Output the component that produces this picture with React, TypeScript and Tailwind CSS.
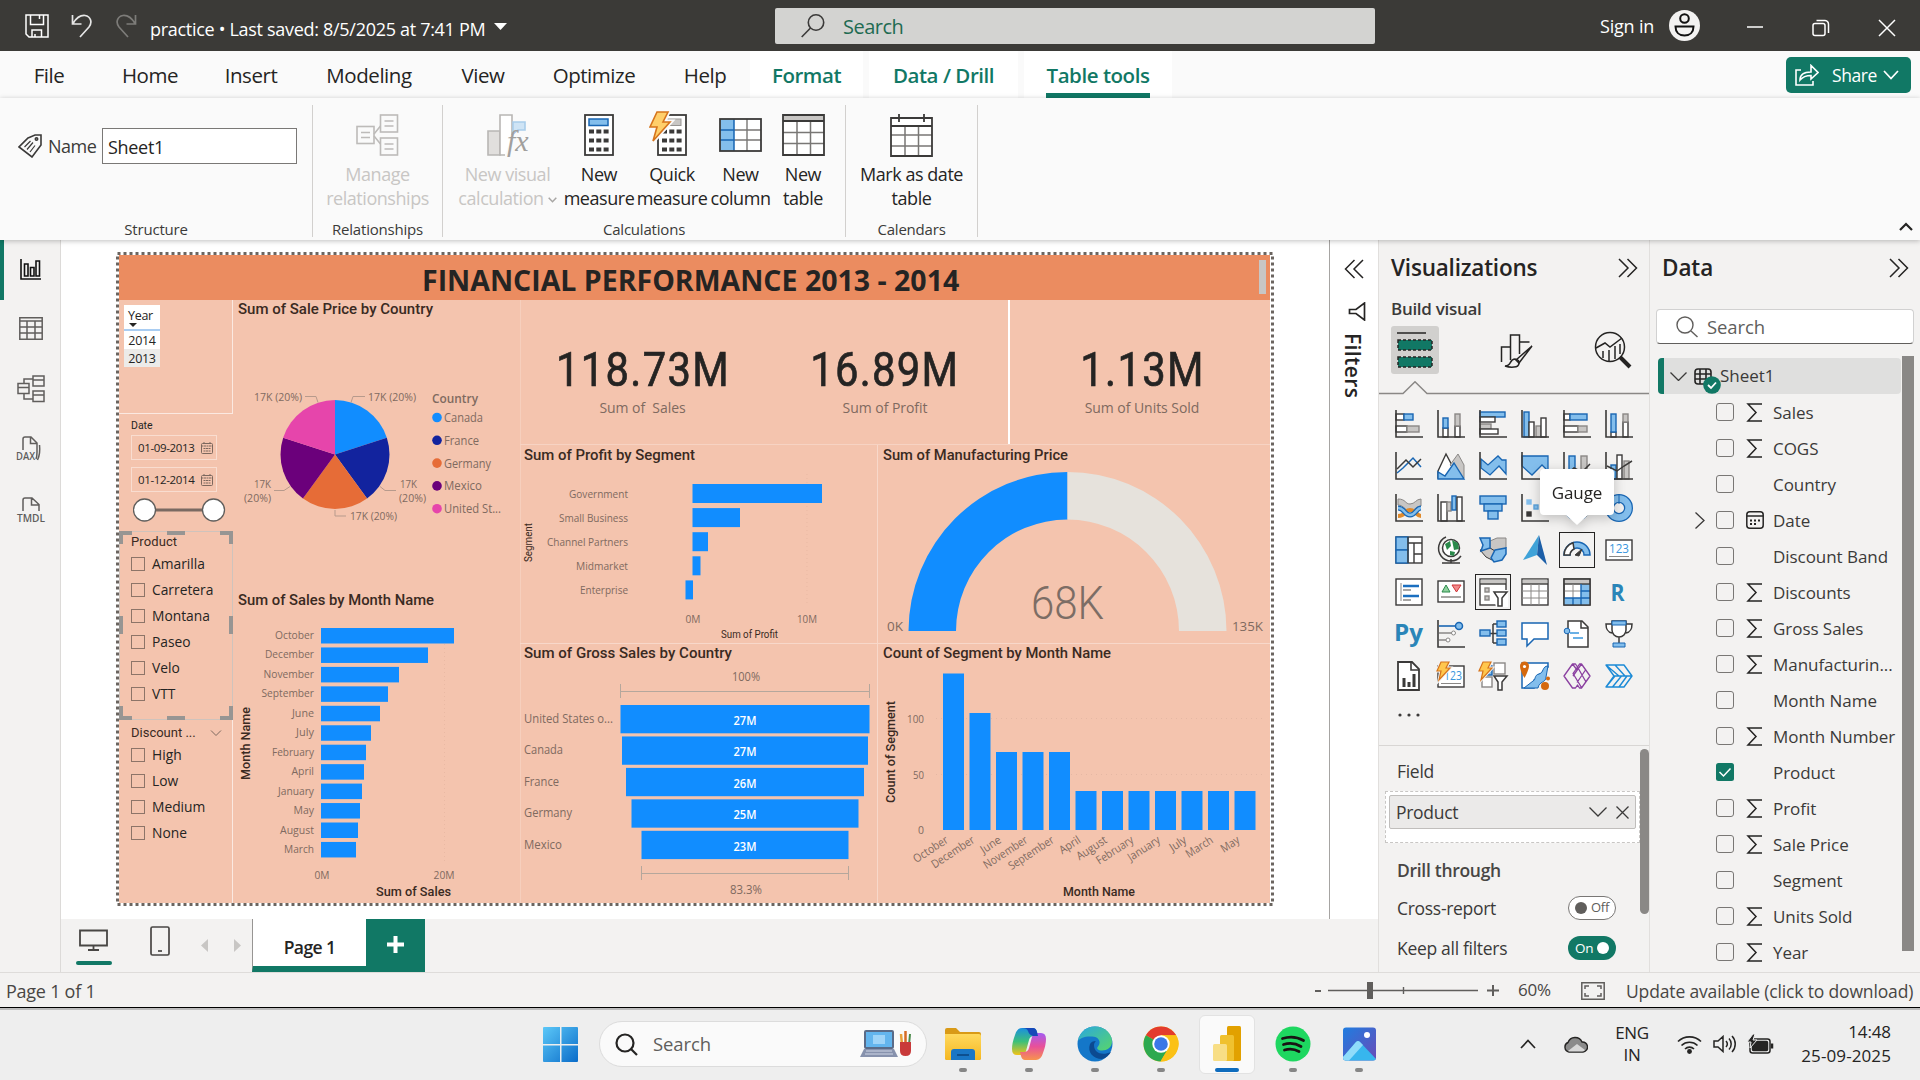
import React from "react";

const K = "#3b3a39";
const B = "#83beec";
const BS = "#1966b3";
const G = "#c8c6c4";
const BAR = "#118dff";
const SEG = '"Open Sans","Noto Sans",sans-serif';
const DIN = 'Roboto,"Open Sans",sans-serif';

/* ---------- shared bits ---------- */

type TP = {
  x: number; y: number; w?: number; s?: number; fill?: string; a?: "start" | "middle" | "end";
  f?: string; wt?: number; t: string; rot?: number;
};
function Tx({ x, y, w, s = 12, fill = "#7f6a60", a = "start", f = SEG, wt = 400, t, rot }: TP) {
  return (
    <text x={x} y={y} fontSize={s} fill={fill} textAnchor={a} fontFamily={f} fontWeight={wt}
      textLength={w} lengthAdjust="spacingAndGlyphs" transform={rot ? `rotate(${rot} ${x} ${y})` : undefined}
      xmlSpace="preserve">{t}</text>
  );
}

function Chevrons({ left }: { left?: boolean }) {
  return (
    <svg width="20" height="20" viewBox="0 0 20 20" fill="none" stroke="#252423" strokeWidth="1.500" className={left ? "rotate-180" : ""}>
      <path d="M1 1l9 9-9 9M9.500 1l9 9-9 9" />
    </svg>
  );
}

/* ---------- title bar ---------- */

function TitleBar() {
  return (
    <header className="flex h-[51px] items-center bg-[#3b3a37] text-white">
      <div className="flex w-[775px] items-center pl-[25px]">
        <svg width="24" height="24" viewBox="0 0 24 24" fill="none" stroke="#fff" strokeWidth="1.500">
          <path d="M1 1h22v22H4l-3-3zM5.500 1v9.500h13V1M7 23v-7h9.500v7M10 20v3M14.500 1v4" />
        </svg>
        <svg className="ml-[22px]" width="22" height="24" viewBox="0 0 22 24" fill="none" stroke="#e6e6e6" strokeWidth="1.700">
          <path d="M1.500 1v9h9M2 9.500C5 4.500 9 1 14 1.500c6 1 7.500 7 4 11.500L9 23" />
        </svg>
        <svg className="ml-[22px]" width="22" height="24" viewBox="0 0 22 24" fill="none" stroke="#7d7c79" strokeWidth="1.700">
          <path d="M20.500 1v9h-9M20 9.500C17 4.500 13 1 8 1.500c-6 1-7.500 7-4 11.500l9 10" />
        </svg>
        <span className="ml-[13px] w-[336px] whitespace-nowrap pt-[7px] text-[18px] leading-6 tracking-[-0.3px]">practice • Last saved: 8/5/2025 at 7:41 PM</span>
        <svg className="ml-2 mt-[3px]" width="13" height="8" viewBox="0 0 13 8"><path d="M0 0h13L6.500 7z" fill="#fff" /></svg>
      </div>
      <div className="mt-px flex h-[36px] w-[600px] items-center rounded-[2px] bg-[#d3d3d1] pl-[26px] text-[#1f6b52]">
        <svg width="24" height="24" viewBox="0 0 24 24" fill="none" stroke="#3b3a39" strokeWidth="1.600">
          <circle cx="15" cy="8.500" r="7.700" /><path d="M9.500 14L.7 23" />
        </svg>
        <span className="ml-[18px] pt-[2px] text-[20px] tracking-[-0.5px]">Search</span>
      </div>
      <div className="flex flex-1 items-center pl-[225px]">
        <span className="w-[69px] whitespace-nowrap pt-[2px] text-[18px] tracking-[-0.2px]">Sign in</span>
        <svg width="31" height="31" viewBox="0 0 31 31" fill="none" stroke="#111" strokeWidth="2">
          <circle cx="15.500" cy="15.500" r="15.500" fill="#f3f2f1" stroke="none" />
          <circle cx="15.500" cy="8.500" r="4.300" />
          <path d="M6.500 16.500h18c0 5.500-3.500 9-9 9s-9-3.500-9-9z" />
        </svg>
        <svg className="ml-[46px] mt-[3px]" width="18" height="18" viewBox="0 0 18 18" stroke="#fff" strokeWidth="1.500"><path d="M1 9h16" /></svg>
        <svg className="ml-[48px] mt-[5px]" width="18" height="18" viewBox="0 0 18 18" fill="none" stroke="#fff" strokeWidth="1.500">
          <rect x="1" y="4.500" width="12" height="12" rx="2" /><path d="M4.500 1.500H13a4 4 0 0 1 3.500 4V14" />
        </svg>
        <svg className="ml-[48px] mt-[5px]" width="18" height="18" viewBox="0 0 18 18" stroke="#fff" strokeWidth="1.500"><path d="M1 1l16 16M17 1L1 17" /></svg>
      </div>
    </header>
  );
}

/* ---------- menu + ribbon ---------- */

function MenuBar() {
  const m = "whitespace-nowrap text-center";
  return (
    <nav className="flex h-[47px] bg-[#fafafa] text-[20.500px] leading-[49px] tracking-[-0.45px] text-[#252423]">
      <span className={"ml-[24px] w-[50px] " + m}>File</span>
      <span className={"ml-[36px] w-[80px] " + m}>Home</span>
      <span className={"ml-[22px] w-[78px] " + m}>Insert</span>
      <span className={"ml-[25px] w-[108px] " + m}>Modeling</span>
      <span className={"ml-[23px] w-[74px] " + m}>View</span>
      <span className={"ml-[24px] w-[100px] " + m}>Optimize</span>
      <span className={"ml-[26px] w-[70px] " + m}>Help</span>
      <span className={"ml-[10px] w-[113px] bg-white font-semibold text-[#117865] " + m}>Format</span>
      <span className={"ml-[6px] w-[149px] bg-white font-semibold text-[#117865] " + m}>Data / Drill</span>
      <span className={"ml-[6px] flex w-[148px] flex-col items-center bg-white font-semibold text-[#117865] " + m}>
        <span className="h-[42px]">Table tools</span>
        <span className="h-[5px] w-[104px] bg-[#117865]" />
      </span>
      <div className="ml-auto mr-[9px] mt-[6px] flex h-[36px] w-[125px] items-center rounded-[5px] bg-[#117865] pl-[9px] text-white">
        <svg width="24" height="22" viewBox="0 0 24 22" fill="none" stroke="#fff" strokeWidth="1.600">
          <path d="M6 6H1v15h17v-4M5 16c0-6 4-8 11-8V1.500l7 7-7 6.500v-3.500c-5 0-8 1-11 4.500z" />
        </svg>
        <span className="ml-[13px] w-[46px] text-[17.500px] leading-9">Share</span>
        <svg className="ml-[5px]" width="16" height="10" viewBox="0 0 16 10" fill="none" stroke="#fff" strokeWidth="1.700"><path d="M1 1l7 7.500L15 1" /></svg>
      </div>
    </nav>
  );
}

function RibbonButton({ icon, a, b, cls, off, chev }: { icon: React.ReactNode; a: string; b: string; cls: string; off?: boolean; chev?: boolean }) {
  return (
    <div className={"flex flex-col items-center " + cls}>
      <div className="flex h-[46px] items-center justify-center pt-[2px]">{icon}</div>
      <div className={"mt-[5px] whitespace-nowrap text-center text-[18px] leading-6 tracking-[-0.45px] " + (off ? "text-[#c8c6c4]" : "text-[#252423]")}>
        {a}<br />{b}
        {chev && <svg className="ml-[4px] inline" width="9" height="6" viewBox="0 0 9 6" fill="none" stroke="#a8a6a4" strokeWidth="1.500"><path d="M.7.7l3.800 4L8.300.7" /></svg>}
      </div>
    </div>
  );
}

const calcDots = [0, 1, 2].flatMap((r) => [0, 1, 2].map((c) => <rect key={`${r}${c}`} x={5 + c * 7.3} y={15.5 + r * 9} width="5" height="4" fill={K} />));

const Doc = ({ x, y }: { x: number; y: number }) => (
  <g transform={`translate(${x} ${y})`}><rect width="17" height="17" /><path d="M4 6h9M4 11h9" /></g>
);

function Ribbon() {
  const grp = "flex flex-col justify-between border-r border-[#d2d0ce] h-[132px]";
  const cap = "text-center text-[15px] leading-[20px] tracking-[-0.2px] text-[#3b3a39] -mb-[2px]";
  return (
    <section className="relative z-10 flex h-[142px] bg-[#fafafa] pt-[7px] shadow-[0_1px_5px_rgba(0,0,0,0.25)]">
      <div className={"w-[313px] " + grp}>
        <div className="flex items-center pl-[18px] pt-[23px]">
          <svg width="24" height="24" viewBox="0 0 24 24" fill="none" stroke={K} strokeWidth="1.600">
            <path d="M10 4l7-3h6v10l-9 12L1 13z" /><circle cx="18.500" cy="5" r="1.200" /><path d="M6.500 13l6-6M9 15.500l6-7M12 18l5-6.500" strokeWidth="1.200" />
          </svg>
          <span className="ml-[6px] w-[54px] text-[18px] tracking-[-0.5px] text-[#3b3a39]">Name</span>
          <div className="h-[36px] w-[195px] border border-[#7a7876] bg-white pl-[5px] text-[18px] leading-[37px] tracking-[-0.3px] text-[#252423]">Sheet1</div>
        </div>
        <div className={cap}>Structure</div>
      </div>
      <div className={"w-[130px] " + grp}>
        <RibbonButton cls="pt-[6px]" off a="Manage" b="relationships" icon={
          <svg width="43" height="42" viewBox="0 0 43 42" fill="none" stroke="#bdbbb9" strokeWidth="1.600">
            <Doc x={1} y={12.5} /><Doc x={24.5} y={1} /><Doc x={24.5} y={24} /><path d="M18 20l6.500-8M18 22l6.500 8" />
          </svg>} />
        <div className={cap}>Relationships</div>
      </div>
      <div className={"w-[403px] " + grp}>
        <div className="flex pl-[12px] pt-[6px]">
          <RibbonButton cls="w-[105px]" off chev a="New visual" b="calculation" icon={
            <svg width="42" height="44" viewBox="0 0 42 44" fill="none" stroke="#b8b6b4" strokeWidth="1.600">
              <path d="M1 42V18h12v24z" fill="#e1dfdd" /><path d="M18 42h-5V2h12v20" fill="#fff" /><path d="M26 16V9h12v8h-7l-5 4z" fill="#cfe4f5" stroke="#a9cdea" />
              <text x="20" y="38" fontSize="30" fontStyle="italic" fontFamily="Liberation Serif,serif" fill="#a19f9d" stroke="none">fx</text>
            </svg>} />
          <RibbonButton cls="w-[78px]" a="New" b="measure" icon={
            <svg width="30" height="42" viewBox="0 0 30 42"><rect x="1" y="1" width="28" height="40" fill="#fff" stroke={K} strokeWidth="1.800" /><rect x="5" y="5" width="19" height="6.500" fill={B} stroke={BS} strokeWidth="1.500" />{calcDots}</svg>} />
          <RibbonButton cls="w-[68px]" a="Quick" b="measure" icon={
            <svg className="mb-[3px] mr-[8px]" width="39" height="46" viewBox="0 0 39 46"><g transform="translate(8 3)"><rect x="1" y="1" width="28" height="40" fill="#fff" stroke={K} strokeWidth="1.800" /><rect x="11" y="5" width="13" height="6.500" fill={G} stroke="#979593" />{calcDots}</g>
              <path d="M8 1h11l-5 10h7L4 30l4-14H1z" fill="#ffd78a" stroke="#fafafa" strokeWidth="5" /><path d="M8 1h11l-5 10h7L4 30l4-14H1z" fill="#ffcf6b" stroke="#d6741c" strokeWidth="1.600" /></svg>} />
          <RibbonButton cls="w-[69px]" a="New" b="column" icon={
            <svg width="43" height="34" viewBox="0 0 43 34"><rect x="1" y="1" width="41" height="32" fill="#fff" /><rect x="1" y="1" width="14" height="32" fill={B} /><path d="M28 1v32M15 12h27M15 22h27" stroke="#797775" strokeWidth="1.400" /><path d="M15 1v32M1 12h14M1 22h14" stroke={BS} strokeWidth="1.500" /><rect x="1" y="1" width="41" height="32" fill="none" stroke={K} strokeWidth="1.800" /></svg>} />
          <RibbonButton cls="w-[56px]" a="New" b="table" icon={
            <svg width="43" height="42" viewBox="0 0 43 42"><rect x="1" y="1" width="41" height="40" fill="#fff" /><rect x="1" y="1" width="41" height="6" fill={G} /><path d="M15 7v34M28.500 7v34M1 18.500h41M1 29.500h41" stroke="#797775" strokeWidth="1.500" /><path d="M1 1h41v40H1zM1 7h41" fill="none" stroke={K} strokeWidth="1.800" /></svg>} />
        </div>
        <div className={cap}>Calculations</div>
      </div>
      <div className={"w-[132px] " + grp}>
        <RibbonButton cls="pt-[6px]" a="Mark as date" b="table" icon={
          <svg width="43" height="43" viewBox="0 0 43 43"><rect x="1" y="4" width="41" height="38" fill="#fff" /><path d="M15 12v30M28.500 12v30M1 21h41M1 32h41" stroke="#797775" strokeWidth="1.500" /><path d="M1 4h41v38H1zM1 12h41M9 0v8M34 0v8" fill="none" stroke={K} strokeWidth="1.800" /></svg>} />
        <div className={cap}>Calendars</div>
      </div>
      <svg className="ml-auto mr-[7px] mt-[117px]" width="14" height="9" viewBox="0 0 14 9" fill="none" stroke="#252423" strokeWidth="2.200"><path d="M1 8l6-6 6 6" /></svg>
    </section>
  );
}

/* ---------- left rail ---------- */

function Rail() {
  return (
    <aside className="flex h-[732px] w-[61px] flex-col border-r border-[#dcdad8] bg-[#f3f2f1]">
      <div className="flex h-[60px] w-full items-center border-l-4 border-[#117865] pl-4">
        <svg className="-mt-[2px]" width="21" height="21" viewBox="0 0 21 21" fill="none" stroke="#111" strokeWidth="1.600"><path d="M1 0v20h20M4.500 5h3.500v12H4.500zM10.500 8.500H14V17h-3.500zM16 2h3.500v15H16z" /></svg>
      </div>
      <div className="flex h-[56px] items-center pl-[19px]">
        <svg width="24" height="23" viewBox="0 0 24 23" fill="none" stroke="#605e5c" strokeWidth="1.500"><path d="M.8.8h22.400v21.400H.8zM.8 4h22.400M.8 10h22.400M.8 16h22.400M8 4v18M16 4v18" /></svg>
      </div>
      <div className="flex h-[65px] items-center pl-[17px]">
        <svg width="28" height="28" viewBox="0 0 28 28" fill="none" stroke="#605e5c" strokeWidth="1.500"><path d="M16 1h11v10H16zM16 5h11M1 8.500h11v10H1zM1 12.500h11M16 16h11v10.500H16zM16 20h11M7 8V4h9M7 19v5h9" /></svg>
      </div>
      <div className="flex h-[56px] items-center pl-[16px]">
        <svg width="27" height="30" viewBox="0 -2 27 30" fill="none" stroke="#605e5c" strokeWidth="1.500"><path d="M7 14V3q0-2 2-2h6l6 6v9q0 5-1 7M14.500 1v6.500H21M23.500 9q1 9-2 15" />
          <text x="0" y="24" fontSize="11" fontWeight="600" fontFamily={SEG} fill="#605e5c" stroke="none" textLength="19" lengthAdjust="spacingAndGlyphs">DAX</text></svg>
      </div>
      <div className="flex h-[66px] items-center pl-[16px]">
        <svg width="30" height="30" viewBox="-1 -2 30 30" fill="none" stroke="#605e5c" strokeWidth="1.500"><path d="M6 14V3q0-2 2-2h7l7 6.500V14M14.500 1v7H22" />
          <text x="0" y="24.500" fontSize="11" fontWeight="600" fontFamily={SEG} fill="#605e5c" stroke="none" textLength="28" lengthAdjust="spacingAndGlyphs">TMDL</text></svg>
      </div>
    </aside>
  );
}

/* ---------- report visuals ---------- */

function Chart({ x, y, w, h, children }: { x: number; y: number; w: number; h: number; children: React.ReactNode }) {
  return <svg className="block shrink-0" width={w} height={h} viewBox={`${x} ${y} ${w} ${h}`}>{children}</svg>;
}

const TITLE = { s: 15.5, fill: "#3a2a22", f: DIN, wt: 500 };

function polar(cx: number, cy: number, r: number, deg: number) {
  const a = ((deg - 90) * Math.PI) / 180;
  return `${cx + r * Math.cos(a)} ${cy + r * Math.sin(a)}`;
}

function PieVisual() {
  const cols = ["#118dff", "#12239e", "#e66c37", "#6b007b", "#e645ab"];
  const names: [string, number][] = [["Canada", 39], ["France", 35], ["Germany", 47], ["Mexico", 38], ["United St...", 57]];
  return (
    <Chart x={233} y={300} w={287} h={285}>
      <Tx {...TITLE} x={238} y={314} w={195} t="Sum of Sale Price by Country" />
      {cols.map((c, i) => (
        <path key={c} d={`M335 454.500L${polar(335, 454.5, 54.5, i * 72)}A54.500 54.500 0 0 1 ${polar(335, 454.5, 54.5, i * 72 + 72)}z`} fill={c} />
      ))}
      <path d="M365 396.500h-12l-2 6M305 396.500h11l2 6M274 490.500h10l6-4M396 490.500h-11l-5-4M346 516h-11v-6" fill="none" stroke="#b79a8c" />
      <Tx x={368} y={401} w={48} s={11.5} t="17K (20%)" />
      <Tx x={254} y={401} w={48} s={11.5} t="17K (20%)" />
      <Tx x={350} y={520} w={47} s={11.5} t="17K (20%)" />
      <Tx x={254} y={488} w={17} s={11.5} t="17K" />
      <Tx x={244} y={502} w={27} s={11.5} t="(20%)" />
      <Tx x={400} y={488} w={17} s={11.5} t="17K" />
      <Tx x={399} y={502} w={27} s={11.5} t="(20%)" />
      <Tx x={432} y={403} w={46} s={12} wt={600} t="Country" />
      {names.map(([n, w], i) => (
        <g key={n}>
          <circle cx="437" cy={417.5 + i * 22.8} r="4.800" fill={cols[i]} />
          <Tx x={444} y={422 + i * 22.8} w={w} s={12.5} t={n} />
        </g>
      ))}
    </Chart>
  );
}

function MonthSalesVisual() {
  const rows: [string, number, number][] = [
    ["October", 454, 39], ["December", 428, 49], ["November", 399, 50.5], ["September", 388, 52.5], ["June", 380, 22], ["July", 371, 18],
    ["February", 366, 42], ["April", 364, 22.5], ["January", 362, 36], ["May", 360, 20.5], ["August", 358, 34], ["March", 356, 30],
  ];
  return (
    <Chart x={233} y={585} w={287} h={318}>
      <Tx {...TITLE} x={238} y={605} w={196} t="Sum of Sales by Month Name" />
      <path d="M444.500 628v234" stroke="#e9b9a3" strokeDasharray="1 3" />
      {rows.map(([n, end, w], i) => (
        <g key={n}>
          <rect x="321" y={628 + i * 19.45} width={end - 321} height="15.500" fill={BAR} />
          <Tx x={314} y={639 + i * 19.45} a="end" w={w} s={11.5} t={n} />
        </g>
      ))}
      <Tx x={322} y={879} a="middle" w={15} s={11.5} t="0M" />
      <Tx x={444} y={879} a="middle" w={21} s={11.5} t="20M" />
      <Tx x={376} y={896} w={75} s={12.5} fill="#3a2a22" f={DIN} wt={500} t="Sum of Sales" />
      <Tx x={250} y={780} w={73} s={12.5} fill="#3a2a22" f={DIN} wt={500} rot={-90} t="Month Name" />
    </Chart>
  );
}

function ProfitVisual() {
  const rows: [string, number, number, number][] = [
    ["Government", 692.5, 129.5, 59], ["Small Business", 692.5, 47.5, 69], ["Channel Partners", 692.5, 15.5, 81], ["Midmarket", 692.5, 8, 52], ["Enterprise", 685.5, 7.5, 48],
  ];
  return (
    <Chart x={520} y={444} w={358} h={199}>
      <Tx {...TITLE} x={524} y={460} w={171} t="Sum of Profit by Segment" />
      <path d="M807 474v130" stroke="#e9b9a3" strokeDasharray="1 3" />
      {rows.map(([n, x, bw, w], i) => (
        <g key={n}>
          <rect x={x} y={484 + i * 24.1} width={bw} height="19" fill={BAR} />
          <Tx x={628} y={498 + i * 24.1} a="end" w={w} s={11} t={n} />
        </g>
      ))}
      <Tx x={693} y={623} a="middle" w={15} s={11} t="0M" />
      <Tx x={807} y={623} a="middle" w={20} s={11} t="10M" />
      <Tx x={721} y={638} w={57} s={10} fill="#3a2a22" f={DIN} t="Sum of Profit" />
      <Tx x={532} y={562} w={39} s={10} fill="#3a2a22" f={DIN} rot={-90} t="Segment" />
    </Chart>
  );
}

function GaugeVisual() {
  return (
    <Chart x={878} y={444} w={392} h={199}>
      <Tx {...TITLE} x={883} y={460} w={185} t="Sum of Manufacturing Price" />
      <path d="M908.500 631A159 159 0 0 1 1067.500 472V519.500A111.500 111.500 0 0 0 956 631z" fill={BAR} />
      <path d="M1226.500 631A159 159 0 0 0 1067.500 472V519.500A111.500 111.500 0 0 1 1179 631z" fill="#e6e2dc" />
      <Tx x={1031} y={619} w={73} s={47} f={DIN} wt={300} fill="#7c6d65" t="68K" />
      <Tx x={887} y={631} w={16} s={13} t="0K" />
      <Tx x={1232} y={631} w={31} s={13} t="135K" />
    </Chart>
  );
}

function FunnelVisual() {
  const rows: [string, number, string, number][] = [["United States o...", 620.5, "27M", 89], ["Canada", 622, "27M", 39], ["France", 626, "26M", 35], ["Germany", 631.5, "25M", 48], ["Mexico", 641.5, "23M", 38]];
  return (
    <Chart x={520} y={643} w={358} h={260}>
      <Tx {...TITLE} x={524} y={658} w={208} t="Sum of Gross Sales by Country" />
      <path d="M620.500 684v14M620.500 691.500h249M869.500 684v14M641.500 866v14M641.500 873.500h207M848.500 866v14" stroke="#b5a79c" fill="none" />
      {rows.map(([n, x, v, w], i) => (
        <g key={n}>
          <rect x={x} y={705 + i * 31.45} width={(745 - x) * 2} height="28.300" fill={BAR} />
          <Tx x={524} y={723 + i * 31.45} w={w} s={12.5} t={n} />
          <Tx x={745} y={725 + i * 31.4} a="middle" w={23} s={12} wt={600} fill="#fff" t={v} />
        </g>
      ))}
      <Tx x={746} y={681} a="middle" w={28} s={12} t="100%" />
      <Tx x={746} y={894} a="middle" w={32} s={12} t="83.3%" />
    </Chart>
  );
}

function CountVisual() {
  const rows: [string, number, number][] = [
    ["October", 673.5, 39], ["December", 713, 49], ["June", 752, 22], ["November", 752, 50], ["September", 752, 52], ["April", 791, 23],
    ["August", 791, 34], ["February", 791, 42], ["January", 791, 36], ["July", 791, 18], ["March", 791, 30], ["May", 791, 20],
  ];
  return (
    <Chart x={878} y={643} w={392} h={260}>
      <Tx {...TITLE} x={883} y={658} w={228} t="Count of Segment by Month Name" />
      <path d="M936 718.500h326M936 774.500h326" stroke="#e5b8a4" strokeDasharray="1 4" />
      {rows.map(([n, top, w], i) => (
        <g key={n}>
          <rect x={943 + i * 26.5} y={top} width="21" height={830 - top} fill={BAR} />
          <Tx x={949 + i * 26.5} y={842} a="end" w={w} s={11.5} rot={-33} t={n} />
        </g>
      ))}
      <Tx x={924} y={722.5} a="end" w={17} s={11.5} t="100" />
      <Tx x={924} y={778.5} a="end" w={11} s={11.5} t="50" />
      <Tx x={924} y={834} a="end" w={6} s={11.5} t="0" />
      <Tx x={895} y={803} w={102} s={12.5} fill="#3a2a22" f={DIN} wt={500} rot={-90} t="Count of Segment" />
      <Tx x={1063} y={896} w={72} s={12.5} fill="#3a2a22" f={DIN} wt={500} t="Month Name" />
    </Chart>
  );
}

function Kpi({ v, label, cls }: { v: string; label: string; cls: string }) {
  return (
    <div className={"flex flex-col items-center whitespace-pre pt-[42px] " + cls}>
      <div className="scale-x-[0.87] font-[Roboto] text-[48px] leading-[56px] tracking-[1.500px] text-[#252423] [-webkit-text-stroke:0.7px_#252423]">{v}</div>
      <div className="mt-[3px] text-[14px] leading-[14px] tracking-[-0.05px] text-[#7f6a60]">{label}</div>
    </div>
  );
}

function CheckRow({ label }: { label: string }) {
  return (
    <div className="flex h-[26px] items-center pl-[12px]">
      <span className="h-[14px] w-[14px] border border-[#8d7468]" />
      <span className="ml-[7px] text-[13.800px] leading-[18px] text-[#252423]">{label}</span>
    </div>
  );
}

function DateInput({ v }: { v: string }) {
  return (
    <div className="flex h-[25px] w-[86px] items-center border border-[#f9ddd0] pl-[6px] text-[#252423]">
      <span className="w-[63px] text-[11.500px] leading-4 tracking-[-0.35px]">{v}</span>
      <svg width="12" height="12" viewBox="0 0 12 12" fill="none" stroke="#7d685e"><rect x=".5" y="1.500" width="11" height="10" rx="1" /><path d="M.5 4h11M3 0v2M9 0v2M2.500 6.500h7M2.500 9h7" strokeDasharray="2 .5" /></svg>
    </div>
  );
}

function Slicers() {
  return (
    <div className="flex w-[114px] flex-col">
      <div className="h-[114px] border-b border-r border-[#fbe9e1] pl-[5px] pt-[5px]">
        <div className="w-[36px] text-center text-[12.500px] leading-[19px] tracking-[-0.3px] text-[#252423]">
          <div className="h-[24px] bg-white pr-[3px] pt-[2px] leading-[17px]">Year
            <svg className="-mt-[1px] ml-[5px] block" width="8" height="5" viewBox="0 0 8 5"><path d="M0 0h8L4 4z" fill="#252423" /></svg>
          </div>
          <div className="h-[20px] border-t-2 border-[#a9cdf2] bg-white">2014</div>
          <div className="h-[18px] bg-[#ecebe9]">2013</div>
        </div>
      </div>
      <div className="flex h-[117px] flex-col pl-[12px] pt-[2px]">
        <span className="h-[19px] font-[Roboto] text-[10.500px] leading-[19px] text-[#252423]">Date</span>
        <DateInput v="01-09-2013" />
        <div className="h-[7px]" />
        <DateInput v="01-12-2014" />
        <svg className="ml-[2px] mt-[5px]" width="94" height="26" viewBox="0 0 94 26"><path d="M11 13h70" stroke="#7a6a62" strokeWidth="3" /><circle cx="11.500" cy="13" r="11" fill="#fff" stroke="#605e5c" strokeWidth="1.300" /><circle cx="80.500" cy="13" r="11" fill="#fff" stroke="#605e5c" strokeWidth="1.300" /></svg>
      </div>
      <div className="relative h-[189px] border border-[#cfc3bc] pt-[2px]">
        <div className="h-[17px] pl-[11px] font-[Roboto] text-[13px] leading-[16px] tracking-[0.1px] text-[#3a2a22]">Product</div>
        <div className="-ml-px">
          {["Amarilla", "Carretera", "Montana", "Paseo", "Velo", "VTT"].map((n) => <CheckRow key={n} label={n} />)}
        </div>
        <svg className="absolute -left-px -top-px" width="114" height="189" viewBox="0 0 114 189" fill="none" stroke="#979593" strokeWidth="4">
          <path d="M2 13V2h11M48 2h18M101 2h11v11M2 85v18M112 85v18M2 175v12h11M48 187h18M101 187h11v-12" />
        </svg>
      </div>
      <div className="h-[183px] border-r border-[#fbe9e1] pt-[4px]">
        <div className="flex h-[18px] items-center pl-[12px]">
          <span className="w-[79px] font-[Roboto] text-[13px] leading-4 text-[#3a2a22]">Discount ...</span>
          <svg width="12" height="7" viewBox="0 0 12 7" fill="none" stroke="#7d685e"><path d="M1 .5l5 5 5-5" /></svg>
        </div>
        {["High", "Low", "Medium", "None"].map((n) => <CheckRow key={n} label={n} />)}
      </div>
    </div>
  );
}

function ReportPage() {
  return (
    <div className="relative ml-[58px] mt-[15px] h-[648px] w-[1151px] bg-[#f4c4ae]">
      <svg className="absolute -left-[3px] -top-[3px]" width="1158" height="654" viewBox="0 0 1158 654" fill="none">
        <rect x="1.500" y="1.500" width="1155" height="651" stroke="#6b6560" strokeWidth="3" strokeDasharray="3 3" />
      </svg>
      <div className="flex h-[45px] bg-[#eb8c60]">
        <h1 className="w-[1140px] whitespace-nowrap pl-[303px] text-[28.500px] font-bold leading-[50px] text-[#252423]">FINANCIAL PERFORMANCE 2013 - 2014</h1>
        <span className="mt-[5px] h-[34px] w-[7px] shrink-0 bg-[#c8c6c4]" />
      </div>
      <div className="flex">
        <Slicers />
        <div className="w-[287px]">
          <PieVisual />
          <MonthSalesVisual />
        </div>
        <div className="w-[750px] border-l border-[#f6cfbd]">
          <div className="-ml-px flex h-[144px]">
            <Kpi v="118.73M" label="Sum of  Sales" cls="w-[245px]" />
            <Kpi v="16.89M" label="Sum of Profit" cls="w-[243px] pr-[3px]" />
            <Kpi v="1.13M" label="Sum of Units Sold" cls="w-[262px] border-l-2 border-white pl-[4px]" />
          </div>
          <div className="-ml-px flex h-[199px] border-t border-[#f7d3c3]">
            <div className="-mt-px"><ProfitVisual /></div>
            <div className="-ml-px border-l border-[#f8d8ca]"><div className="-mt-px"><GaugeVisual /></div></div>
          </div>
          <div className="-ml-px flex h-[260px] border-t border-[#f8d8ca]">
            <div className="-mt-px"><FunnelVisual /></div>
            <div className="-ml-px border-l border-[#f8d8ca]"><div className="-mt-px"><CountVisual /></div></div>
          </div>
        </div>
      </div>
    </div>
  );
}

function PageTabs() {
  return (
    <div className="flex h-[53px] bg-[#f3f2f1]">
      <div className="ml-[15px] w-[36px] pt-[10px]">
        <svg className="ml-[3px]" width="29" height="22" viewBox="0 0 29 22" fill="none" stroke="#484644" strokeWidth="1.800"><path d="M1 1.500h27v15H1zM14.500 17v3M9 21h11" /></svg>
        <div className="mt-[10px] h-[4px] rounded-full bg-[#117865]" />
      </div>
      <svg className="ml-[38px] mt-[7px]" width="20" height="30" viewBox="0 0 20 30" fill="none" stroke="#484644" strokeWidth="1.700"><rect x="1" y="1" width="18" height="28" rx="1.500" /><path d="M8 25h4" /></svg>
      <svg className="ml-[31px] mt-[20px]" width="7" height="13" viewBox="0 0 7 13"><path d="M7 0v13L0 6.500z" fill="#c8c6c4" /></svg>
      <svg className="ml-[26px] mt-[20px]" width="7" height="13" viewBox="0 0 7 13"><path d="M0 0v13l7-6.500z" fill="#c8c6c4" /></svg>
      <div className="ml-[11px] w-[114px] border-b-[6px] border-l border-b-[#117865] border-l-[#979593] bg-white text-center text-[17.500px] font-semibold leading-[56px] tracking-[-0.6px] text-[#252423]">Page 1</div>
      <div className="flex w-[59px] items-center justify-center bg-[#117865]">
        <svg className="-mt-[2px]" width="17" height="17" viewBox="0 0 17 17" stroke="#fff" strokeWidth="4"><path d="M8.500 0v17M0 8.500h17" /></svg>
      </div>
    </div>
  );
}

/* ---------- visualizations pane ---------- */

const Ax = () => <path d="M1 0v27h27" fill="none" stroke={K} strokeWidth="1.600" />;
const R = ({ x, y, w, h, c = "#fff", s = K }: { x: number; y: number; w: number; h: number; c?: string; s?: string }) => (
  <rect x={x} y={y} width={w} height={h} fill={c} stroke={s} strokeWidth="1.400" />
);
const Num = ({ x, y, w }: { x: number; y: number; w: number }) => (
  <text x={x} y={y} fontSize="13" fontFamily={SEG} fill="#3a96dd" textLength={w} lengthAdjust="spacingAndGlyphs">123</text>
);
const Funnel = () => <path d="M15 14h13l-5 6v8h-4v-8z" fill="#fff" stroke={K} strokeWidth="1.500" />;
const Bolt = () => (
  <><path d="M4 0h8L9 6h4L2 18l2-9H0z" fill="#fafafa" stroke="#f3f2f1" strokeWidth="3" /><path d="M4 0h8L9 6h4L2 18l2-9H0z" fill="#ffc74d" stroke="#d6741c" strokeWidth="1.200" /></>
);
const GS = "#8a8886";

const vizIcons: React.ReactNode[] = [
  <><R x={1} y={4} w={8} h={6} /><R x={9} y={4} w={9} h={6} c={B} s={BS} /><R x={1} y={16} w={11} h={6} /><R x={12} y={16} w={12} h={6} c={G} s={GS} /><Ax /></>,
  <><R x={6} y={18} w={5} h={9} /><R x={6} y={8} w={5} h={10} c={B} s={BS} /><R x={18} y={16} w={5} h={11} /><R x={18} y={4} w={5} h={12} c={G} s={GS} /><Ax /></>,
  <><R x={1} y={2} w={25} h={5} c={B} s={BS} /><R x={1} y={7} w={15} h={5} /><R x={1} y={14} w={11} h={5} c={G} s={GS} /><R x={1} y={19} w={18} h={5} /><Ax /></>,
  <><R x={3} y={2} w={5} h={25} c={B} s={BS} /><R x={8} y={12} w={5} h={15} /><R x={15} y={16} w={5} h={11} c={G} s={GS} /><R x={20} y={8} w={5} h={19} /><Ax /></>,
  <><R x={1} y={4} w={6} h={6} /><R x={7} y={4} w={17} h={6} c={B} s={BS} /><R x={1} y={16} w={14} h={6} /><R x={15} y={16} w={9} h={6} c={G} s={GS} /><Ax /></>,
  <><R x={6} y={22} w={5} h={5} /><R x={6} y={4} w={5} h={18} c={B} s={BS} /><R x={18} y={12} w={5} h={15} /><R x={18} y={4} w={5} h={8} c={G} s={GS} /><Ax /></>,
  <><path d="M2 21l6-5 10-10 8 9" fill="none" stroke={BS} strokeWidth="1.500" /><path d="M2 17l9-9 7 7 8-8" fill="none" stroke={K} strokeWidth="1.500" /><Ax /></>,
  <><path d="M1 19L9 2l9 17v7H1z" fill="#fff" stroke={K} strokeWidth="1.400" /><path d="M13 13l8-11 6 11v13z" fill={G} stroke={GS} /><path d="M1 27l0-7 7 4 9-13 10 16z" fill={B} stroke={BS} strokeWidth="1.400" /></>,
  <><path d="M2 7l7 6 10-9 4 4h4v14l-7-8-9 9-9-7z" fill={B} stroke={BS} strokeWidth="1.300" /><Ax /></>,
  <><path d="M1 4h26v15l-6-6-10 10-10-9z" fill={B} stroke={BS} strokeWidth="1.300" /><Ax /></>,
  <><R x={6} y={4} w={6} h={23} c={B} s={BS} /><R x={18} y={4} w={6} h={23} c={G} s={GS} /><path d="M2 24l9-8 8 4 8-8" fill="none" stroke={K} strokeWidth="1.500" /><Ax /></>,
  <><R x={6} y={13} w={5} h={14} c={B} s={BS} /><R x={12} y={3} w={5} h={24} /><R x={19} y={9} w={5} h={18} c={G} s={GS} /><path d="M2 14l10 5 7-5 8-5" fill="none" stroke={K} strokeWidth="1.500" /><Ax /></>,
  <><path d="M3 5c8 0 7 5 12 5s6-5 11-5v7c-5 0-6 5-11 5S9 11 3 11z" fill={G} stroke={GS} /><path d="M3 22c8 0 6-6 12-6s6 6 11 6" fill="none" stroke="#e08a2b" strokeWidth="4" /><path d="M3 14c7 0 6 7 12 7s6-7 11-7" fill="none" stroke={BS} strokeWidth="5" /><path d="M3 14c7 0 6 7 12 7s6-7 11-7" fill="none" stroke={B} strokeWidth="2.500" /><Ax /></>,
  <><R x={4} y={8} w={6} h={19} /><R x={10} y={8} w={4} h={9} c={G} s={GS} /><R x={15} y={2} w={4} h={14} c={B} s={BS} /><R x={20} y={3} w={5} h={24} /><Ax /></>,
  <><R x={1} y={2} w={26} h={8} c={B} s={BS} /><R x={5} y={10} w={18} h={7} c={B} s={BS} /><R x={9} y={17} w={10} h={8} c={B} s={BS} /></>,
  <><R x={6} y={6} w={4} h={4} c={B} s={B} /><R x={13} y={11} w={4} h={4} c={B} s="#5ba3dc" /><R x={6} y={18} w={4} h={4} c={K} /><Ax /></>,
  <><circle cx="14" cy="14" r="12" fill={B} stroke={BS} strokeWidth="1.500" /><path d="M14 14V2a12 12 0 0 1 9 20z" fill="#fff" stroke={K} strokeWidth="1.500" /></>,
  <><circle cx="14" cy="14" r="9.500" fill="none" stroke={BS} strokeWidth="9" /><circle cx="14" cy="14" r="9.500" fill="none" stroke={B} strokeWidth="6.500" /><path d="M14 0v10" stroke={BS} /></>,
  <><R x={1} y={1} w={26} h={26} /><R x={1} y={1} w={12} h={13} c={B} s={BS} /><R x={1} y={14} w={12} h={13} c={B} s={BS} /><path d="M13 7h14M19 7v20M19 18h8M13 1v26" stroke={K} strokeWidth="1.400" /></>,
  <><circle cx="14" cy="12" r="8.500" fill="#fff" stroke={K} strokeWidth="1.500" /><path d="M8 8l5-3 1 5-4 4zM15 4l6 3 1 6-5 1zM13 15l5 1-1 4-4-1z" fill="#2b8a4b" /><path d="M9 1A12.500 12.500 0 1 0 24 20M14 23v4M5 27h18" fill="none" stroke={K} strokeWidth="1.500" /></>,
  <><path d="M11 5l7-3h9v10l-10 4-6-4z" fill={G} stroke={GS} /><path d="M1 14l10-2 5 3-3 9-6-3z" fill={G} stroke={K} /><path d="M1 2h10v10l-9 3 2-6z" fill={B} stroke={BS} strokeWidth="1.500" /><path d="M16 14l11-2v6l-4 6-8 2-3-4z" fill={B} stroke={BS} strokeWidth="1.500" /></>,
  <><path d="M18 -1L2 24l14-5z" fill="#3fa2d8" /><path d="M18 -1l8 30-10-10z" fill="#1c5fa8" /></>,
  <><path d="M1 19a13 13 0 0 1 26 0h-6a7 7 0 0 0-14 0z" fill={B} stroke={BS} strokeWidth="1.500" /><path d="M1 19A13 13 0 0 1 10 6.800L11 13a7 7 0 0 0-4 6z" fill="#fff" stroke={K} strokeWidth="1.500" /><path d="M12 19l7-6-3 7z" fill={K} stroke={K} /></>,
  <><R x={1} y={4} w={26} h={20} /><Num x={4} y={17} w={20} /><path d="M4 20.500h20" stroke={GS} /></>,
  <><R x={1} y={1} w={26} h={26} /><path d="M6 5v18" stroke={GS} /><path d="M8 8h16M8 18h16" stroke="#1b6fc0" strokeWidth="2.600" /><path d="M8 12h8M8 22h8" stroke={GS} strokeWidth="1.600" /></>,
  <><R x={1} y={3} w={26} h={21} /><path d="M9 7l4 7H5z" fill="#8fd19e" stroke="#2b8a4b" /><path d="M15 7h9l-4.500 7z" fill="#f08a8a" stroke="#d13438" /><path d="M4 19h20" stroke={GS} strokeWidth="1.500" /></>,
  <><R x={1} y={1} w={26} h={26} /><rect x="1.700" y="1.700" width="24.600" height="4" fill={G} /><path d="M1 6h26" stroke={K} strokeWidth="1.400" /><R x={6} y={10} w={4} h={4} c={G} s={GS} /><R x={6} y={18} w={4} h={4} c={G} s={GS} /><path d="M13 12h16v17H17z" fill="#fff" /><Funnel /></>,
  <><R x={1} y={1} w={26} h={26} /><rect x="1.700" y="1.700" width="24.600" height="4" fill={G} /><path d="M1 6h26" stroke={K} strokeWidth="1.400" /><path d="M10 6v21M18 6v21M1 13h26M1 20h26" stroke={GS} /></>,
  <><R x={1} y={1} w={26} h={26} /><rect x="1.700" y="1.700" width="24.600" height="4" fill={G} /><path d="M18 6h9v21H1v-7h17z" fill={B} /><path d="M1 6h26" stroke={K} strokeWidth="1.400" /><path d="M10 6v14M1 13h17" stroke={GS} /><path d="M18 6v21M10 20v7M1 20h26M18 13h9" stroke={BS} strokeWidth="1.400" /><rect x="1" y="1" width="26" height="26" fill="none" stroke={K} strokeWidth="1.400" /></>,
  <text x="5.500" y="23" fontSize="24" fontWeight="700" fontFamily={SEG} fill="#2a85b8" textLength="14" lengthAdjust="spacingAndGlyphs">R</text>,
  <text x="-1" y="21" fontSize="24" fontWeight="700" fontFamily={SEG} fill="#2a85b8" textLength="29" lengthAdjust="spacingAndGlyphs">Py</text>,
  <><path d="M2 6h18" stroke={BS} strokeWidth="1.600" /><path d="M2 13h13M2 20h8" stroke={GS} strokeWidth="1.600" /><circle cx="22" cy="6" r="3.500" fill={B} stroke={BS} strokeWidth="1.500" /><circle cx="16.500" cy="13" r="2" fill="#fff" stroke={GS} /><circle cx="11" cy="20" r="2" fill="#fff" stroke={GS} /><Ax /></>,
  <><path d="M11 13.500h7M14 4v19M14 4h4M14 23h4" fill="none" stroke={K} strokeWidth="1.500" /><R x={1} y={10} w={10} h={6} c={B} s={BS} /><R x={18} y={1} w={9} h={6} c={B} s={BS} /><R x={18} y={10} w={9} h={6} c={B} s={BS} /><R x={18} y={19} w={9} h={6} c={B} s={BS} /></>,
  <path d="M1 3h26v16H13l-7 7v-7H1z" fill="#fff" stroke={BS} strokeWidth="1.500" />,
  <><path d="M5 1h14l6 6v20H5z" fill="#fff" stroke={K} strokeWidth="1.500" /><path d="M18 1v7h7" fill="none" stroke={K} strokeWidth="1.500" /><path d="M7 13h9M10 18h10" stroke="#3a96dd" strokeWidth="1.500" /><circle cx="4" cy="11" r="2.800" fill={B} stroke={BS} /></>,
  <><path d="M7 1h14v9a7 7 0 0 1-14 0zM7 4H1c0 6 2 8 6 9M21 4h6c0 6-2 8-6 9M14 17v6" fill="#fff" stroke={K} strokeWidth="1.500" /><path d="M7 1h14v4H7zM8 23h12v4H8z" fill={B} stroke={BS} /></>,
  <><path d="M3 0h14l7 7v21H3z" fill="#fff" stroke={K} strokeWidth="1.800" /><path d="M16 0v8h8" fill="none" stroke={K} strokeWidth="1.600" /><path d="M9 16v9M14 20v5M19 12v13" stroke={K} strokeWidth="3" /></>,
  <><R x={1} y={4} w={26} h={21} /><Num x={7} y={18} w={18} /><path d="M4 21.500h20" stroke={GS} /><Bolt /></>,
  <><R x={15} y={1} w={11} h={11} s={GS} /><R x={3} y={15} w={10} h={10} s={GS} /><R x={3} y={4} w={10} h={9} c={B} s={BS} /><Funnel /><Bolt /></>,
  <><path d="M1 1h26v4c-5 0-3 6-8 7s-2 5-6 6v8H1z" fill="#fff" stroke={BS} strokeWidth="1.500" /><path d="M27 4c-6 0-4 7-9 8s-3 6-6 7l-9 7h14c1-7 8-5 8-11z" fill={B} stroke={BS} /><path d="M-1 4a4.500 4.500 0 0 1 9 0c0 4-4.500 12-4.500 12S-1 9 -1 4z" fill="#d4690f" /><circle cx="3.500" cy="4.500" r="1.600" fill="#fff" /><circle cx="24" cy="24" r="4" fill="#d4690f" /><circle cx="27" cy="16.500" r="2" fill="#d4690f" /></>,
  <path d="M9.500 2L1 14l8.500 12h3l2-3 2 3h2L27 14 18.500 2h-2l-2 3-2-3zM14.500 5L10 11.500l8.500 14M18.500 2L10 14M14 20.500L22.500 8M14.500 5L23 20M9.500 2L14.500 8.500" fill="none" stroke="#8a3fa0" strokeWidth="1.300" strokeLinejoin="round" />,
  <path d="M1 3h18l8 11-8 11H1l8-11zM9 14h18M1 3l13 11M10 3l10 11M1 25l9-11M7.500 25l9-11M14 25l8-11" fill="none" stroke="#1b8ad6" strokeWidth="1.400" strokeLinejoin="round" />,
];

function VizPane() {
  return (
    <aside className="flex h-[732px] w-[271px] flex-col border-l border-[#e1dfdd] bg-[#f3f2f1]">
      <div className="flex h-[54px] items-center pl-[12px] pr-[11px] pt-[2px]">
        <h2 className="flex-1 text-[22.500px] font-semibold tracking-[-0.2px] text-[#252423]">Visualizations</h2>
        <Chevrons />
      </div>
      <div className="h-[32px] pl-[12px] text-[17px] font-semibold leading-[30px] tracking-[-0.3px] text-[#3b3a39]">Build visual</div>
      <div className="flex h-[55px] pl-[12px]">
        <div className="h-[48px] w-[48px] rounded-[3px] bg-[#d1d0ce]">
          <svg width="48" height="48" viewBox="0 0 48 48"><path d="M6 7h29" stroke="#252423" strokeWidth="1.500" /><path d="M7 14h34v10H7zM7 31h34v10H7z" fill="#117865" stroke="#252423" strokeWidth="1.500" strokeDasharray="3 2" /></svg>
        </div>
        <svg className="ml-[61px] mt-[6px]" width="34" height="38" viewBox="0 0 34 38" fill="none" stroke="#252423" strokeWidth="1.500">
          <path d="M1.500 30V15h9M10.500 28V3h9v19M19.500 10h10" /><path d="M32 14L16 28l3 3z" fill="#f3f2f1" /><path d="M5 34c7 0 4-7 10-7 6 1 5 8-1 8-4 .5-6 0-9-1z" />
        </svg>
        <svg className="ml-[60px] mt-[5px]" width="38" height="38" viewBox="0 0 38 38" fill="none" stroke="#252423" strokeWidth="1.500">
          <circle cx="16" cy="16" r="14.500" /><path d="M2 17l9-5 5 4 12-9M9 20v7M15 19v11M21 15v13M26 13v10" /><path d="M26 26l10 10" strokeWidth="4" />
        </svg>
      </div>
      <svg className="block" width="271" height="14" viewBox="0 0 271 14" fill="none" stroke="#8a8886" strokeWidth="1.500"><path d="M0 12.500h24L36 .8l12 11.700h223" /></svg>
      <div className="relative ml-[12px] mt-[11px] grid w-[252px] grid-cols-[repeat(6,42px)] grid-rows-[repeat(7,42px)]">
        {vizIcons.map((ic, i) => (
          <div key={i} className={"flex h-[36px] w-[36px] items-center justify-center " + (i === 22 || i === 26 ? "border border-[#252423]" : "")}>
            <svg width="28" height="28" viewBox="0 0 28 28" overflow="visible">{ic}</svg>
          </div>
        ))}
        <div className="absolute left-[149px] top-[63px] drop-shadow-[0_3px_6px_rgba(0,0,0,0.22)]">
          <div className="flex h-[46px] w-[74px] items-center justify-center rounded-[4px] bg-white pt-[2px] text-[17px] tracking-[-0.15px] text-[#252423]">Gauge</div>
          <svg className="mx-auto block" width="22" height="10" viewBox="0 0 22 10"><path d="M0 0h22L11 10z" fill="#fff" /></svg>
        </div>
      </div>
      <div className="h-[45px] pl-[18px] pt-[13px]">
        <svg width="26" height="4" viewBox="0 0 26 4" fill="#3b3a39"><circle cx="3" cy="2" r="1.600" /><circle cx="12" cy="2" r="1.600" /><circle cx="21" cy="2" r="1.600" /></svg>
      </div>
      <div className="flex h-[227px] border-t border-[#d8d6d4] text-[17.500px] tracking-[-0.3px] text-[#3b3a39]">
        <div className="w-[262px] pl-[6px]">
          <div className="h-[45px] pl-[12px] leading-[51px]">Field</div>
          <div className="h-[52px] w-[255px] border border-dashed border-[#c8c6c4] bg-white p-[3px]">
            <div className="flex h-[34px] items-center rounded-[2px] border border-[#c0bebc] bg-[#ebeae9] pl-[6px]">
              <span className="flex-1">Product</span>
              <svg width="18" height="10" viewBox="0 0 18 10" fill="none" stroke="#3b3a39" strokeWidth="1.300"><path d="M.5.5l8.500 8.500 8.500-8.500" /></svg>
              <svg className="ml-[9px] mr-[6px]" width="13" height="13" viewBox="0 0 13 13" stroke="#3b3a39" strokeWidth="1.300"><path d="M.5.5l12 12M12.500.5l-12 12" /></svg>
            </div>
          </div>
          <div className="mt-[9px] h-[36px] pl-[12px] font-semibold leading-[36px] text-[#484644]">Drill through</div>
          <div className="flex h-[40px] items-center pl-[12px]">
            <span className="w-[171px] leading-[40px]">Cross-report</span>
            <span className="flex h-[24px] w-[48px] items-center rounded-full border border-[#797775] bg-white pl-[6px] text-[13px] text-[#605e5c]"><i className="mr-[4px] h-[12px] w-[12px] rounded-full bg-[#605e5c]" />Off</span>
          </div>
          <div className="flex h-[40px] items-center pl-[12px]">
            <span className="w-[171px] leading-[40px]">Keep all filters</span>
            <span className="flex h-[24px] w-[48px] items-center rounded-full bg-[#117865] pl-[7px] text-[13.500px] text-white">On<i className="ml-[4px] h-[12px] w-[12px] rounded-full bg-white" /></span>
          </div>
        </div>
        <div className="mt-[3px] h-[165px] w-[9px] rounded-full bg-[#8a8886]" />
      </div>
    </aside>
  );
}

/* ---------- data pane ---------- */

const fields: [string, string][] = [
  ["Sales", "s"], ["COGS", "s"], ["Country", ""], ["Date", "d"], ["Discount Band", ""], ["Discounts", "s"], ["Gross Sales", "s"], ["Manufacturin...", "s"],
  ["Month Name", ""], ["Month Number", "s"], ["Product", "c"], ["Profit", "s"], ["Sale Price", "s"], ["Segment", ""], ["Units Sold", "s"], ["Year", "s"],
];

function DataPane() {
  return (
    <aside className="flex h-[732px] w-[271px] flex-col border-l border-[#e1dfdd] bg-[#f3f2f1] text-[#3b3a39]">
      <div className="flex h-[54px] items-center pl-[12px] pr-[11px] pt-[2px]">
        <h2 className="flex-1 text-[22.500px] font-semibold tracking-[-0.1px] text-[#252423]">Data</h2>
        <Chevrons />
      </div>
      <div className="ml-[6px] mt-[15px] flex h-[35px] w-[258px] items-center rounded-[4px] border border-[#d1d1d1] border-b-[#605e5c] bg-white pl-[19px] text-[18.500px] text-[#605e5c]">
        <svg width="22" height="22" viewBox="0 0 22 22" fill="none" stroke="#605e5c" strokeWidth="1.400"><circle cx="9" cy="9" r="8" /><path d="M15 15l6.500 6" /></svg>
        <span className="ml-[9px] tracking-[-0.1px]">Search</span>
      </div>
      <div className="mt-[12px] flex h-[606px] overflow-hidden">
        <div className="ml-[8px] w-[244px] pt-[2px] text-[17px] tracking-[-0.05px]">
          <div className="relative flex h-[36px] w-[243px] items-center rounded-[4px] border-l-[6px] border-[#117865] bg-[#dfdfde] pl-[6px]">
            <svg width="17" height="9" viewBox="0 0 17 9" fill="none" stroke="#3b3a39" strokeWidth="1.300"><path d="M.5.500l8 8 8-8" /></svg>
            <svg className="ml-[7px]" width="18" height="17" viewBox="0 0 18 17" fill="none" stroke="#252423" strokeWidth="1.600"><rect x="1" y="1" width="16" height="15" rx="3" /><path d="M1 6h16M1 11h16M6 1v15M12 1v15" /></svg>
            <svg className="absolute left-[39px] top-[18px]" width="18" height="18" viewBox="0 0 18 18" fill="none"><circle cx="9" cy="9" r="8.800" fill="#117865" /><path d="M5 9l3 3 5-5.500" stroke="#fff" strokeWidth="1.800" /></svg>
            <span className="ml-[8px]">Sheet1</span>
          </div>
          {fields.map(([n, k]) => (
            <div key={n} className="flex h-[36px] items-center pl-[37px]">
              <span className="flex w-[21px]">{k === "d" && <svg width="10" height="17" viewBox="0 0 10 17" fill="none" stroke="#3b3a39" strokeWidth="1.300"><path d="M.5.5l8.500 8-8.500 8" /></svg>}</span>
              {k === "c"
                ? <svg width="18" height="18" viewBox="0 0 18 18" fill="none"><rect width="18" height="18" rx="2.500" fill="#117865" /><path d="M3.500 9l4 4 7-7.500" stroke="#fff" strokeWidth="1.500" /></svg>
                : <span className="h-[18px] w-[18px] rounded-[3px] border border-[#797775]" />}
              <span className="flex w-[39px] items-center pl-[12px]">
                {k === "s" && <svg width="17" height="19" viewBox="0 0 17 19" fill="none" stroke="#252423" strokeWidth="1.500"><path d="M16 1H2l8 8.500L2 18h14" /></svg>}
                {k === "d" && <svg width="18" height="18" viewBox="0 0 18 18" fill="none" stroke="#252423" strokeWidth="1.500"><rect x=".8" y=".8" width="16.400" height="16.400" rx="3" /><path d="M1 5h16" /><path d="M4 9.500h10M4 13h7" strokeWidth="2" strokeDasharray="2 2" /></svg>}
              </span>
              <span className="whitespace-nowrap pt-px">{n}</span>
            </div>
          ))}
        </div>
        <div className="h-[595px] w-[12px] shrink-0 bg-[#8a8886]" />
      </div>
    </aside>
  );
}

/* ---------- status + taskbar ---------- */

function StatusBar() {
  return (
    <footer className="flex h-[35px] items-center border-t border-[#dedcda] bg-[#f3f2f1] text-[18px] text-[#484644]">
      <span className="w-[1315px] pl-[6px] pt-[2px] tracking-[-0.25px]">Page 1 of 1</span>
      <svg width="186" height="18" viewBox="1315 0 186 18" stroke="#605e5c"><path d="M1315 10h6M1487 9.500h12M1493 4v11" strokeWidth="2" /><path d="M1328 9.500h150M1403.500 6v7" strokeWidth="1.400" /><path d="M1370 1v17" strokeWidth="6" /></svg>
      <span className="ml-[17px] w-[63px] text-[17px] tracking-[-0.2px]">60%</span>
      <svg className="mt-px" width="24" height="18" viewBox="0 0 24 18" fill="none" stroke="#605e5c" strokeWidth="1.500"><path d="M.8.8h22.400v16.400H.8zM4 7V4h4M16 4h4v3M20 11v3h-4M8 14H4v-3" /></svg>
      <span className="ml-[21px] whitespace-nowrap pt-[2px] text-[17.500px] tracking-[-0.15px]">Update available (click to download)</span>
    </footer>
  );
}

function AppSlot({ children, active }: { children: React.ReactNode; active?: boolean }) {
  return (
    <div className={"flex h-[59px] w-[56px] flex-col items-center " + (active ? "rounded-[6px] border border-[#e2e2e2] bg-[#fafafa] pt-[10px]" : "pt-[11px]")}>
      <svg width="36" height="36" viewBox="0 0 36 36">{children}</svg>
      {active ? <i className="mt-[6px] h-[4px] w-[24px] rounded-full bg-[#0f6cbd]" /> : <i className="mt-[6px] h-[4px] w-[8px] rounded-full bg-[#868686]" />}
    </div>
  );
}

function Taskbar() {
  return (
    <div className="flex h-[72px] items-center border-t-2 border-[#bdbdbd] bg-[#eeeeee] pb-[2px]">
      <svg width="0" height="0" className="absolute">
        <defs>
          <linearGradient id="win" x1="0" y1="0" x2="1" y2="1"><stop offset="0" stopColor="#5cc8f8" /><stop offset="1" stopColor="#0a6cc9" /></linearGradient>
          <linearGradient id="cpl" x1="0" y1="0" x2="0" y2="1"><stop offset="0" stopColor="#1a8fe0" /><stop offset=".5" stopColor="#3cc07a" /><stop offset="1" stopColor="#f2c317" /></linearGradient>
          <linearGradient id="cpr" x1="0" y1="0" x2="0" y2="1"><stop offset="0" stopColor="#a35bf2" /><stop offset=".5" stopColor="#e8509a" /><stop offset="1" stopColor="#f7944d" /></linearGradient>
          <linearGradient id="edg" x1="0" y1="0" x2="1" y2="1"><stop offset="0" stopColor="#2aa7e0" /><stop offset="1" stopColor="#58d66a" /></linearGradient>
          <linearGradient id="pho" x1="0" y1="0" x2="1" y2="1"><stop offset="0" stopColor="#1f7de0" /><stop offset="1" stopColor="#6a4bb8" /></linearGradient>
          <linearGradient id="fol" x1="0" y1="0" x2="0" y2="1"><stop offset="0" stopColor="#ffd95e" /><stop offset="1" stopColor="#f5b721" /></linearGradient>
        </defs>
      </svg>
      <svg className="ml-[543px]" width="35" height="35" viewBox="0 0 35 35" fill="url(#win)"><path d="M0 1q0-1 1-1h16v17H0zM18.500 0H34q1 0 1 1v16H18.500zM0 18.500h17V35H1q-1 0-1-1zM18.500 18.500H35V34q0 1-1 1H18.500z" /></svg>
      <div className="ml-[21px] flex h-[46px] w-[328px] items-center rounded-full border border-[#dcdcdc] bg-[#fafafa] pl-[15px]">
        <svg width="23" height="23" viewBox="0 0 23 23" fill="none" stroke="#252423" strokeWidth="2.200"><circle cx="10" cy="10" r="8.500" /><path d="M16 16l6 6" /></svg>
        <span className="ml-[15px] w-[207px] text-[18.500px] tracking-[-0.1px] text-[#605e5c]">Search</span>
        <svg width="52" height="32" viewBox="0 0 52 32"><rect x="4" y="2" width="30" height="19" rx="2" fill="#5a6b88" /><rect x="6" y="4" width="26" height="15" fill="#63b5ee" /><rect x="13" y="7" width="12" height="9" fill="#9fd4f8" /><path d="M4 21h30l4 8H0z" fill="#8792ad" /><path d="M6 23h26M5 26h28" stroke="#cfd6e6" /><path d="M42 17l-1-11" stroke="#e8a13a" strokeWidth="2.500" /><path d="M45.500 17V3" stroke="#d66b27" strokeWidth="2.500" /><path d="M49 17l1-11" stroke="#4a8a4a" strokeWidth="2" /><path d="M40 14h11v9q0 5-5.500 5T40 23z" fill="#c93a3a" /></svg>
      </div>
      <div className="ml-[8px] flex items-center gap-[10px] pt-px">
        <AppSlot><path d="M0 4q0-2 2-2h9l4 4H34q2 0 2 2v24q0 2-2 2H2q-2 0-2-2z" fill="#d99a17" /><path d="M0 8h34q2 0 2 2v22q0 2-2 2H2q-2 0-2-2z" fill="url(#fol)" /><path d="M6 34v-8q0-3 3-3h18q3 0 3 3v8z" fill="#1976c5" /><path d="M12 29h12" stroke="#0d4f8f" strokeWidth="2" /></AppSlot>
        <AppSlot><path d="M11 2h11q3 0 4 4l1 4h-4q-4 0-5 4l-3 11q-1 4-5 4H6q-5 0-5-6 0-6 3-14 2-7 7-7z" fill="url(#cpl)" /><path d="M25 34H14q-3 0-4-4l-1-4h4q4 0 5-4l3-11q1-4 5-4h4q5 0 5 6 0 6-3 14-2 7-7 7z" fill="url(#cpr)" /><path d="M11 2h11q3 0 4 4l1 4h-5q-4-1-5-5-1-3-6-3z" fill="#1648b8" /></AppSlot>
        <AppSlot><circle cx="18" cy="18" r="17.500" fill="#1477c9" /><path d="M1 15C3 5 10 .5 18 .5c10 0 17 7 17 15 0 6-5 9-10 9-4 0-6-2-4-4 4-5 0-10-6-10C8 10 3 12 1 15z" fill="url(#edg)" /><path d="M13 18c-3 8 3 15 12 15 4-1 7-4 9-7-9 4-17 1-17-7 0-2 1-3 2-4-3 0-5 1-6 3z" fill="#0c4a91" /></AppSlot>
        <AppSlot><circle cx="18" cy="18" r="17.500" fill="#fbc116" /><path d="M18 18L2.900 9.200A17.500 17.500 0 0 1 33.200 9.300H18z" fill="#e33b2e" /><path d="M18 18L2.900 9.200A17.500 17.500 0 0 0 17.500 35.500L25.500 22z" fill="#2da94f" /><path d="M18 9.300h15.200A17.500 17.500 0 0 1 17.500 35.500L25.500 22z" fill="#fbc116" /><circle cx="18" cy="18" r="8.700" fill="#fff" /><circle cx="18" cy="18" r="6.800" fill="#3b78e7" /></AppSlot>
        <AppSlot active><rect x="18" y="0" width="14" height="35" rx="1.500" fill="#e2a100" /><rect x="11" y="9" width="14" height="26" rx="1.500" fill="#f0c12f" /><rect x="4" y="18" width="14" height="17" rx="1.500" fill="#f8de85" /></AppSlot>
        <AppSlot><circle cx="18" cy="18" r="17.500" fill="#1ed760" /><path d="M7.500 12.500c7-2.300 15-1.500 21 2M8.500 18.500c6-1.800 12.500-1 17.500 2M9.500 24c5-1.500 10-1 14.500 1.500" fill="none" stroke="#191414" strokeWidth="2.800" strokeLinecap="round" /></AppSlot>
        <AppSlot><rect x="2" y="1.500" width="33" height="33" rx="3" fill="url(#pho)" /><path d="M2 31l13-15q2-2 4 0l16 17q-1 1.500-3 1.500H5q-3 0-3-3.500z" fill="#37b6ee" /><path d="M2 31l13-15q2-2 4 0l3 3L8 34.500H5q-3 0-3-3.500z" fill="#8fdcfa" /><circle cx="26" cy="9" r="3" fill="#fff" /></AppSlot>
      </div>
      <div className="ml-auto flex items-center text-[#252423]">
        <svg width="16" height="10" viewBox="0 0 16 10" fill="none" stroke="#252423" strokeWidth="1.700"><path d="M1 9l7-7.500L15 9" /></svg>
        <svg className="ml-[27px]" width="25" height="17" viewBox="0 0 25 17"><path d="M6 16a5 5 0 0 1-1-9.500A7.500 7.500 0 0 1 19 6a5 5 0 0 1 1 10z" fill="#8b8b8b" stroke="#252423" strokeWidth="1.400" /><path d="M5 15l9-7 8 6q-1 1.500-3 1.500H6z" fill="#d8d8d8" /></svg>
        <div className="ml-[24px] w-[40px] text-center text-[17px] leading-[22.500px] tracking-[-0.3px]">ENG<br />IN</div>
        <svg className="ml-[25px]" width="25" height="19" viewBox="0 0 25 19" fill="none" stroke="#252423" strokeWidth="1.700"><path d="M1 6.500a16.500 16.500 0 0 1 23 0M4.500 10.500a11.500 11.500 0 0 1 16 0M8 14a6.500 6.500 0 0 1 9 0" /><circle cx="12.500" cy="16.500" r="1.600" fill="#252423" /></svg>
        <svg className="ml-[11px]" width="23" height="18" viewBox="0 0 23 18" fill="none" stroke="#252423" strokeWidth="1.500"><path d="M1 6h4l5-4.500v15L5 12H1zM13 6a4.500 4.500 0 0 1 0 6M16 3.500a8 8 0 0 1 0 11M19 1a11.500 11.500 0 0 1 0 16" /></svg>
        <svg className="ml-[11px]" width="27" height="21" viewBox="0 -1 27 21" fill="none" stroke="#252423" strokeWidth="1.500"><rect x="3" y="4" width="20" height="14" rx="2.500" /><rect x="5.500" y="6.500" width="15" height="9" rx="1" fill="#252423" /><path d="M25 8.500v5" strokeWidth="2.500" /><path d="M6-1L0 7h4l-1 6 7-8H6l2-6z" fill="#252423" stroke="#eee" strokeWidth="1" /></svg>
        <div className="ml-[14px] mr-[29px] w-[103px] whitespace-nowrap text-right text-[17px] leading-[24px] tracking-[0.1px]"><span className="tracking-[-0.1px]">14:48</span><br />25-09-2025</div>
      </div>
    </div>
  );
}

export default function App() {
  return (
    <div className="h-[1080px] w-[1920px] overflow-hidden bg-white font-['Open_Sans','Noto_Sans',sans-serif]">
      <TitleBar />
      <MenuBar />
      <Ribbon />
      <main className="flex h-[732px]">
        <Rail />
        <div className="flex w-[1317px] flex-col">
          <div className="flex h-[679px]">
            <div className="w-[1269px] border-r border-[#a6a4a2] bg-white"><ReportPage /></div>
            <aside className="flex flex-1 flex-col items-center bg-white pt-[19px]">
              <Chevrons left />
              <svg className="ml-[6px] mt-[23px]" width="18" height="19" viewBox="0 0 18 19" fill="none" stroke="#252423" strokeWidth="1.700"><path d="M16.500 1v17L8 11.500H1.500v-4H8z" /></svg>
              <span className="ml-[-3px] mt-[12px] h-[76px] text-[21px] font-semibold leading-[22px] tracking-[0.4px] text-[#252423] [writing-mode:vertical-rl]">Filters</span>
            </aside>
          </div>
          <PageTabs />
        </div>
        <VizPane />
        <DataPane />
      </main>
      <StatusBar />
      <div className="h-px bg-black" />
      <Taskbar />
    </div>
  );
}
